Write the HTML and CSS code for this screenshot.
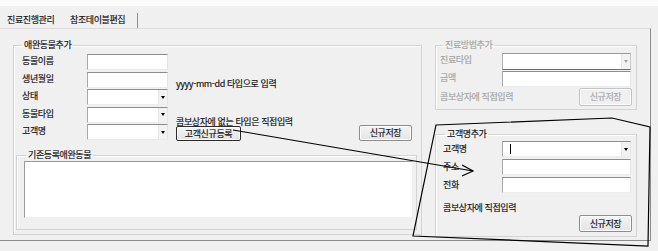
FILE: index.html
```html
<!DOCTYPE html>
<html lang="ko">
<head>
<meta charset="utf-8">
<title>참조테이블편집</title>
<link rel="stylesheet" href="styles.css">
</head>
<body>
<div class="topband"></div>
<div class="tabs">
  <div class="tab tab1">진료진행관리</div>
  <div class="tab tab2">참조테이블편집</div>
</div>
<div class="panel">
  <fieldset class="group pet">
    <legend>애완동물추가</legend>
    <div class="petform">
      <div class="lbl">동물이름</div>
      <div class="input"></div>
      <div></div>
      <div class="lbl">생년월일</div>
      <div class="input"></div>
      <div class="hint hint1">yyyy-mm-dd 타입으로 입력</div>
      <div class="lbl">상태</div>
      <div class="combo"><span class="drop"></span></div>
      <div></div>
      <div class="lbl">동물타입</div>
      <div class="combo"><span class="drop"></span></div>
      <div class="hint hint2">콤보상자에 없는 타입은 직접입력</div>
      <div class="lbl">고객명</div>
      <div class="combo"><span class="drop"></span></div>
      <div class="btnrow">
        <div class="btn focus">고객신규등록</div>
        <div class="btn save1">신규저장</div>
      </div>
    </div>
    <fieldset class="group list">
      <legend>기존등록애완동물</legend>
      <div class="listbox"></div>
    </fieldset>
  </fieldset>

  <div class="rightcol">
    <fieldset class="group method disabled">
      <legend>진료방법추가</legend>
      <div class="rform">
        <div class="lbl">진료타입</div>
        <div class="combo tall"><span class="drop"></span></div>
        <div class="lbl">금액</div>
        <div class="input"></div>
      </div>
      <div class="rfoot">
        <div class="lbl">콤보상자에 직접입력</div>
        <div class="btn dis">신규저장</div>
      </div>
    </fieldset>

    <fieldset class="group customer">
      <legend>고객명추가</legend>
      <div class="rform cform">
        <div class="lbl">고객명</div>
        <div class="combo"><span class="caret"></span><span class="drop"></span></div>
        <div class="lbl">주소</div>
        <div class="input"></div>
        <div class="lbl">전화</div>
        <div class="input"></div>
      </div>
      <div class="cnote lbl">콤보상자에 직접입력</div>
      <div class="cfoot"><div class="btn">신규저장</div></div>
    </fieldset>
  </div>
</div>

<svg class="annot" width="658" height="251" viewBox="0 0 658 251">
  <polygon points="436,125 612,118 650,127 648,246 413,236" fill="none" stroke="#000" stroke-width="1.2"/>
  <line x1="233" y1="130" x2="473" y2="171" stroke="#000" stroke-width="1.2"/>
  <polyline points="462,165 473,171 462,176" fill="none" stroke="#000" stroke-width="1.2"/>
</svg>
</body>
</html>
```
FILE: styles.css
```css
* { box-sizing: border-box; }
html, body { margin: 0; padding: 0; }
body {
  width: 658px;
  height: 251px;
  background: #f0f0f0;
  font-family: "Noto Sans CJK KR", "Noto Sans", sans-serif;
  font-size: 9px;
  letter-spacing: -0.4px;
  color: #111;
  -webkit-text-stroke: 0.15px #111;
  position: relative;
  overflow: hidden;
}
.topband { height: 6px; background: #fbfbfb; }
.tabs {
  height: 22px;
  display: flex;
  align-items: flex-end;
  padding-left: 3px;
}
.tab {
  height: 15px;
  line-height: 13px;
  padding-left: 4px;
  white-space: nowrap;
}
.tab1 { width: 63px; }
.tab2 { width: 72px; border-right: 1px solid #8c8c8c; }

.panel {
  width: 651px;
  height: 213px;
  border-top: 1px solid #dcdcdc;
  border-right: 1px solid #8c8c8c;
  border-bottom: 1px solid #8c8c8c;
  padding: 11px 0 0 13px;
  display: grid;
  grid-template-columns: 409px 202px;
  column-gap: 13px;
  align-items: start;
}

.group {
  margin: 0;
  min-inline-size: 0;
  border: 1px solid #d3d3d3;
  box-shadow: inset 1px 1px 0 #fff;
}
.group legend {
  padding: 0 2px;
  margin-left: 6px;
  line-height: 10px;
  font-size: 9px;
}

.pet { padding: 4px 4px 4px 2px; }
.petform {
  margin-left: 6px;
  display: grid;
  grid-template-columns: 65px 81px 1fr;
  grid-template-rows: repeat(5, 16px);
  row-gap: 1.5px;
  column-gap: 0;
}
.lbl { line-height: 14px; white-space: nowrap; }
.hint { padding-left: 8px; white-space: nowrap; }
.hint1 { margin-top: 4px; line-height: 16px; }
.hint2 { margin-top: 7px; line-height: 16px; }

.input {
  height: 16px;
  background: #fff;
  border: 1px solid;
  border-color: #8e8e8e #e4e4e4 #ececec #a9a9a9;
}
.combo {
  height: 16px;
  background: #fff;
  border: 1px solid;
  border-color: #8e8e8e #e4e4e4 #ececec #a9a9a9;
  display: flex;
  justify-content: flex-end;
  align-items: center;
}
.combo.tall { height: 17px; }
.drop {
  width: 9px;
  height: 100%;
  background: #f2f2f2;
  border-left: 1px solid #e6e6e6;
  display: flex;
  align-items: center;
  justify-content: center;
}
.drop::after {
  content: "";
  border-left: 2.5px solid transparent;
  border-right: 2.5px solid transparent;
  border-top: 3px solid #000;
}
.caret {
  width: 1px;
  height: 10px;
  background: #000;
  margin-right: auto;
  margin-left: 7px;
}

.btnrow {
  padding-left: 8px;
  display: flex;
  justify-content: space-between;
  align-items: flex-start;
  padding-right: 5px;
}
.btn {
  height: 16px;
  line-height: 14px;
  text-align: center;
  white-space: nowrap;
  background: linear-gradient(#f4f4f4, #e4e4e4);
  border: 1px solid #8d8d8d;
  border-radius: 2px;
  box-shadow: inset 0 0 0 1px #fcfcfc;
}
.btn.focus {
  width: 65px;
  margin-top: 2px;
  height: 15px;
  border-color: #2b2b2b;
}
.btn.save1 { width: 53px; margin-top: 1px; }

.list {
  margin: 10px 0 0 0;
  padding: 1px 3px 11px 7px;
}
.list legend { margin-left: 2px; }
.listbox {
  height: 57px;
  background: #fff;
  border: 1px solid;
  border-color: #9a9a9a #f0f0f0 #f0f0f0 #9a9a9a;
}

.rightcol { display: flex; flex-direction: column; }
.method { padding: 3px 4px 3px 4px; }
.method legend { margin-left: 3px; }
.rform {
  display: grid;
  grid-template-columns: 62px 129px;
  row-gap: 1px;
}
.rfoot {
  display: flex;
  justify-content: space-between;
  align-items: center;
  margin-top: 1px;
}
.btn.dis {
  width: 53px;
  height: 18px;
  line-height: 16px;
  color: #a8a8a8;
  -webkit-text-stroke-color: #a8a8a8;
  border-color: #c4c4c4;
  background: #f0f0f0;
}
.disabled .lbl, .disabled legend { color: #a3a3a3; -webkit-text-stroke-color: #a3a3a3; }
.disabled .combo .drop::after { border-top-color: #a0a0a0; }
.disabled .combo { border-color: #9a9a9a #c8c8c8 #6e6e6e #b0b0b0; }

.customer { margin-top: 19px; padding: 2px 4px 4px 4px; }
.customer legend { margin-left: 5px; }
.cform { row-gap: 2px; grid-template-columns: 59px 129px; margin-left: 3px; }
.cform .lbl { line-height: 15px; }
.cnote { margin: 8px 0 0 3px; }
.cfoot { display: flex; justify-content: flex-end; margin-top: 0px; }
.cfoot .btn { width: 53px; height: 17px; line-height: 15px; }

.annot { position: absolute; left: 0; top: 0; pointer-events: none; }
```
